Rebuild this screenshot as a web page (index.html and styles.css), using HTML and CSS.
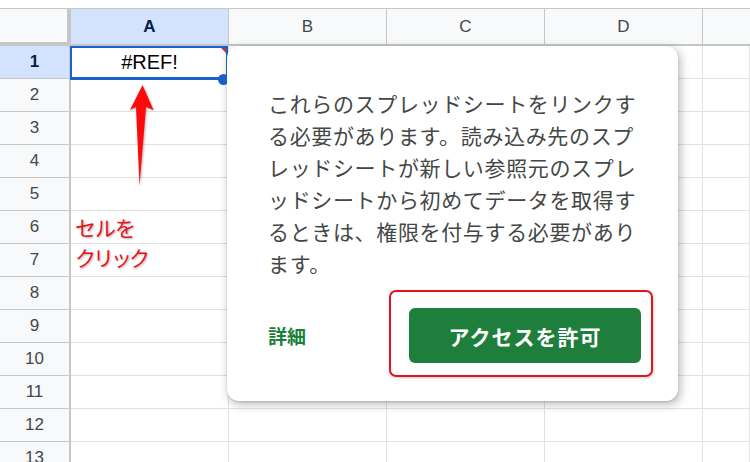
FILE: index.html
```html
<!DOCTYPE html>
<html lang="ja">
<head>
<meta charset="utf-8">
<title>Sheets - アクセスを許可</title>
<link rel="stylesheet" href="styles.css">
</head>
<body>
<div class="page">
  <div class="sheet">
    <div class="corner"></div>
    <div class="ch ch-sel">A</div>
    <div class="ch">B</div>
    <div class="ch">C</div>
    <div class="ch">D</div>
    <div class="ch ch-end"></div>

    <div class="rh rh-sel">1</div><div class="cell a1">#REF!<span class="handle"></span></div><div class="cell"></div><div class="cell"></div><div class="cell"></div><div class="cell"></div>
    <div class="rh">2</div><div class="cell"></div><div class="cell"></div><div class="cell"></div><div class="cell"></div><div class="cell"></div>
    <div class="rh">3</div><div class="cell"></div><div class="cell"></div><div class="cell"></div><div class="cell"></div><div class="cell"></div>
    <div class="rh">4</div><div class="cell"></div><div class="cell"></div><div class="cell"></div><div class="cell"></div><div class="cell"></div>
    <div class="rh">5</div><div class="cell"></div><div class="cell"></div><div class="cell"></div><div class="cell"></div><div class="cell"></div>
    <div class="rh">6</div><div class="cell"></div><div class="cell"></div><div class="cell"></div><div class="cell"></div><div class="cell"></div>
    <div class="rh">7</div><div class="cell"></div><div class="cell"></div><div class="cell"></div><div class="cell"></div><div class="cell"></div>
    <div class="rh">8</div><div class="cell"></div><div class="cell"></div><div class="cell"></div><div class="cell"></div><div class="cell"></div>
    <div class="rh">9</div><div class="cell"></div><div class="cell"></div><div class="cell"></div><div class="cell"></div><div class="cell"></div>
    <div class="rh">10</div><div class="cell"></div><div class="cell"></div><div class="cell"></div><div class="cell"></div><div class="cell"></div>
    <div class="rh">11</div><div class="cell"></div><div class="cell"></div><div class="cell"></div><div class="cell"></div><div class="cell"></div>
    <div class="rh">12</div><div class="cell"></div><div class="cell"></div><div class="cell"></div><div class="cell"></div><div class="cell"></div>
    <div class="rh">13</div><div class="cell"></div><div class="cell"></div><div class="cell"></div><div class="cell"></div><div class="cell"></div>
  </div>

  <svg class="arrow" width="36" height="112" viewBox="0 0 36 112" aria-hidden="true">
    <polygon points="17.5,5 28.5,30 21,27 14.5,106 11,27 5,30" fill="#ff0a0a"/>
  </svg>
  <div class="note">セルを<br><span class="note-tight">クリック</span></div>

  <div class="dialog" role="dialog">
    <p class="msg">これらのスプレッドシートをリンクする必要があります。読み込み先のスプレッドシートが新しい参照元のスプレッドシートから初めてデータを取得するときは、権限を付与する必要があります。</p>
    <div class="actions">
      <a class="link">詳細</a>
      <button class="allow">アクセスを許可</button>
    </div>
  </div>

  <div class="highlight"></div>
</div>
</body>
</html>
```

FILE: styles.css
```css
html, body {
  margin: 0;
  padding: 0;
  background: #ffffff;
}

.page {
  position: relative;
  width: 750px;
  height: 462px;
  overflow: hidden;
  padding-top: 8px;
  box-sizing: border-box;
  font-family: "Liberation Sans", Arial, sans-serif;
}

.sheet {
  display: grid;
  grid-template-columns: 71px repeat(4, 158px) 1fr;
  grid-template-rows: 37px;
  grid-auto-rows: 33px;
  border-top: 1px solid #c7c7c7;
}

.corner,
.ch,
.rh,
.cell {
  box-sizing: border-box;
}

.corner {
  background: #f8f9fa;
  border-right: 4px solid #c4c7c5;
  border-bottom: 4px solid #c4c7c5;
}

.ch {
  background: #f8f9fa;
  border-right: 1px solid #c7c7c7;
  border-bottom: 2px solid #c4c7c5;
  display: flex;
  align-items: center;
  justify-content: center;
  font-size: 17px;
  color: #444746;
}

.ch-end {
  border-right: 0;
}

.ch-sel {
  background: #d3e3fd;
  color: #041e49;
  font-weight: 700;
}

.rh {
  background: #f8f9fa;
  border-right: 2px solid #c4c7c5;
  border-bottom: 1px solid #c7c7c7;
  display: flex;
  align-items: center;
  justify-content: center;
  font-size: 17px;
  color: #444746;
}

.rh-sel {
  background: #d3e3fd;
  color: #041e49;
  font-weight: 700;
}

.cell {
  border-right: 1px solid #e1e1e1;
  border-bottom: 1px solid #e1e1e1;
}

.a1 {
  position: relative;
  display: flex;
  align-items: center;
  justify-content: center;
  font-size: 20px;
  color: #000000;
}

.a1::after {
  content: "";
  position: absolute;
  left: -1px;
  top: 0;
  right: 0;
  bottom: -2px;
  border: 2px solid #1a62d0;
  border-bottom-width: 3px;
}

.a1::before {
  content: "";
  position: absolute;
  top: 0;
  right: 0;
  width: 0;
  height: 0;
  border-top: 9px solid #c0392b;
  border-left: 9px solid transparent;
}

.handle {
  position: absolute;
  right: -1px;
  bottom: -7px;
  width: 11px;
  height: 11px;
  border-radius: 50%;
  background: #1a62d0;
}

.arrow {
  position: absolute;
  left: 125px;
  top: 80px;
  filter: drop-shadow(1px 1px 1px rgba(0, 0, 0, 0.3));
}

.note {
  position: absolute;
  left: 75px;
  top: 212px;
  font-family: "Noto Sans CJK JP", sans-serif;
  font-size: 21px;
  line-height: 30px;
  letter-spacing: -1px;
  color: #e8141b;
  text-shadow: 1px 1px 2px rgba(0, 0, 0, 0.3);
}

.note-tight {
  letter-spacing: -3px;
}

.dialog {
  position: absolute;
  left: 227px;
  top: 46px;
  width: 451px;
  height: 355px;
  box-sizing: border-box;
  padding: 41px 37px 38px 41px;
  background: #ffffff;
  border-radius: 12px;
  box-shadow: 2px 3px 8px 1px rgba(60, 64, 67, 0.32), 0 1px 2px rgba(60, 64, 67, 0.2);
  display: flex;
  flex-direction: column;
  font-family: "Noto Sans CJK JP", sans-serif;
}

.msg {
  margin: 0;
  font-size: 21px;
  line-height: 32px;
  letter-spacing: 0.65px;
  color: #444746;
  line-break: anywhere;
}

.actions {
  margin-top: auto;
  display: flex;
  align-items: center;
  justify-content: space-between;
}

.link {
  font-size: 19px;
  font-weight: 700;
  letter-spacing: 0;
  color: #188038;
}

.allow {
  width: 232px;
  height: 55px;
  border: 0;
  border-radius: 6px;
  background: #1e7e3c;
  color: #ffffff;
  font-family: "Noto Sans CJK JP", sans-serif;
  font-size: 21px;
  font-weight: 700;
  letter-spacing: 1px;
  padding: 0;
}

.highlight {
  position: absolute;
  left: 389px;
  top: 290px;
  width: 264px;
  height: 87px;
  box-sizing: border-box;
  border: 2px solid #e0141b;
  border-radius: 7px;
  box-shadow: 1px 1px 3px rgba(0, 0, 0, 0.2);
}
```
